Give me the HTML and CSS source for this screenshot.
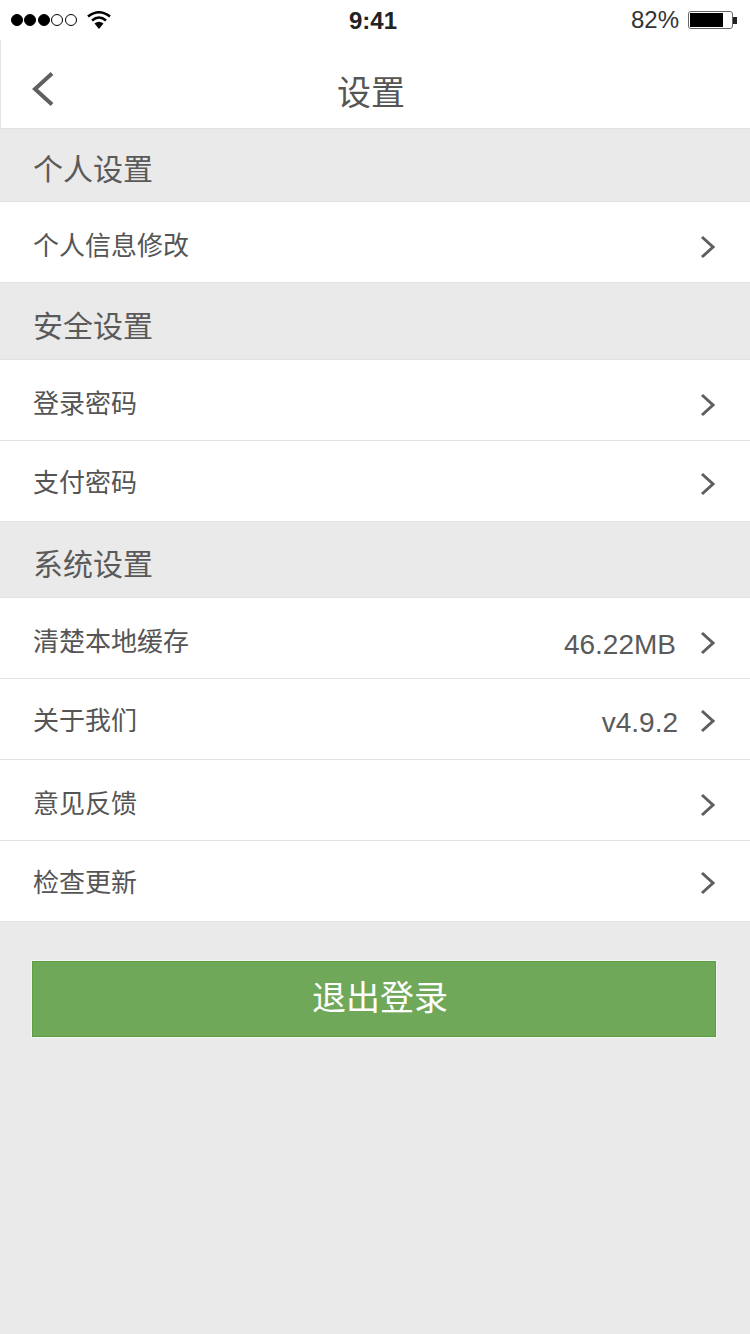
FILE: index.html
```html
<!DOCTYPE html>
<html lang="zh-CN">
<head>
    <meta charset="UTF-8">
    <meta name="viewport" content="width=device-width, initial-scale=1.0">
    <title>设置</title>
    <link rel="stylesheet" href="styles.css">
</head>
<body>

    <div class="status-bar">
        <div class="status-left">
            <span class="dot on"></span><span class="dot on"></span><span class="dot on"></span><span class="dot"></span><span class="dot"></span>
            <svg class="wifi" width="24" height="19" viewBox="0 0 24 19">
                <path d="M1 6.5 Q12 -2 23 6.5" fill="none" stroke="#000" stroke-width="2.6"/>
                <path d="M5 10.5 Q12 4.5 19 10.5" fill="none" stroke="#000" stroke-width="2.6"/>
                <path d="M7.5 13.5 Q12 10 16.5 13.5 L12 19 Z" fill="#000"/>
            </svg>
        </div>
        <div class="status-time">9:41</div>
        <div class="status-right">
            <span class="percent">82%</span>
            <span class="battery"><span class="battery-level"></span></span>
            <span class="battery-tip"></span>
        </div>
    </div>

    <header class="nav">
        <svg class="back" width="24" height="36" viewBox="0 0 24 36">
            <path d="M21 2.5 L4 18 L21 33.5" fill="none" stroke="#5f5f5f" stroke-width="4"/>
        </svg>
        <h1>设置</h1>
    </header>

    <div class="section-title sec-1">个人设置</div>
    <div class="row row-first"><span class="label">个人信息修改</span><svg class="arrow" width="16" height="24" viewBox="0 0 16 24"><path d="M2 2 L13 12 L2 22" fill="none" stroke="#5f5f5f" stroke-width="3"/></svg></div>

    <div class="section-title sec-2">安全设置</div>
    <div class="row row-first row-low"><span class="label">登录密码</span><svg class="arrow" width="16" height="24" viewBox="0 0 16 24"><path d="M2 2 L13 12 L2 22" fill="none" stroke="#5f5f5f" stroke-width="3"/></svg></div>
    <div class="row row-tight"><span class="label">支付密码</span><svg class="arrow" width="16" height="24" viewBox="0 0 16 24"><path d="M2 2 L13 12 L2 22" fill="none" stroke="#5f5f5f" stroke-width="3"/></svg></div>

    <div class="section-title sec-3">系统设置</div>
    <div class="row row-first"><span class="label">清楚本地缓存</span><span class="value">46.22MB</span><svg class="arrow" width="16" height="24" viewBox="0 0 16 24"><path d="M2 2 L13 12 L2 22" fill="none" stroke="#5f5f5f" stroke-width="3"/></svg></div>
    <div class="row row-high"><span class="label">关于我们</span><span class="value">v4.9.2</span><svg class="arrow" width="16" height="24" viewBox="0 0 16 24"><path d="M2 2 L13 12 L2 22" fill="none" stroke="#5f5f5f" stroke-width="3"/></svg></div>
    <div class="row row-low"><span class="label">意见反馈</span><svg class="arrow" width="16" height="24" viewBox="0 0 16 24"><path d="M2 2 L13 12 L2 22" fill="none" stroke="#5f5f5f" stroke-width="3"/></svg></div>
    <div class="row row-high"><span class="label">检查更新</span><svg class="arrow" width="16" height="24" viewBox="0 0 16 24"><path d="M2 2 L13 12 L2 22" fill="none" stroke="#5f5f5f" stroke-width="3"/></svg></div>

    <div class="logout-wrap">
        <button class="logout">退出登录</button>
    </div>

</body>
</html>
```

FILE: styles.css
```css
html, body {
    margin: 0;
    padding: 0;
}

body {
    width: 750px;
    height: 1334px;
    overflow: hidden;
    background-color: #eaeaea;
    color: #555;
    font-family: "Liberation Sans", "Noto Sans CJK SC", sans-serif;
}

.status-bar {
    height: 40px;
    background-color: white;
    display: flex;
    align-items: center;
    justify-content: space-between;
    padding: 0 13px 0 11px;
    box-sizing: border-box;
    position: relative;
}

.status-left {
    display: flex;
    align-items: center;
    gap: 1px;
}

.dot {
    width: 10px;
    height: 10px;
    border: 1px solid #000;
    border-radius: 50%;
    margin-right: 0.4px;
}

.dot.on {
    background-color: #000;
}

.wifi {
    margin-left: 9px;
    margin-top: -1px;
}

.status-time {
    font-size: 24px;
    font-weight: bold;
    color: #222;
    position: absolute;
    left: 349px;
    top: 7px;
}

.status-right {
    display: flex;
    align-items: center;
}

.percent {
    font-size: 24px;
    color: #333;
    margin-right: 9px;
}

.battery {
    box-sizing: border-box;
    width: 45px;
    height: 18px;
    border: 1px solid #666;
    border-radius: 3px;
    padding: 1px;
    background-color: white;
    display: block;
}

.battery-level {
    display: block;
    width: 33px;
    height: 14px;
    background-color: #000;
}

.battery-tip {
    width: 4px;
    height: 7px;
    background-color: #222;
}

.nav {
    height: 88px;
    background-color: white;
    border-left: 1px solid #e4e4e4;
    border-bottom: 1px solid #e2e2e2;
    display: flex;
    align-items: center;
    justify-content: center;
    position: relative;
}

.nav h1 {
    margin: 12px 9px 0 0;
    font-size: 34px;
    font-weight: normal;
    color: #555;
}

.back {
    position: absolute;
    left: 30px;
    top: 31px;
}

.section-title {
    box-sizing: border-box;
    padding-left: 33px;
    font-size: 30px;
    display: flex;
    align-items: center;
    color: #5a5a5a;
}

.sec-1 { height: 72px; padding-top: 3px; }
.sec-2 { height: 76px; padding-top: 5px; }
.sec-3 { height: 75px; padding-top: 5px; }

.row {
    box-sizing: border-box;
    height: 81px;
    background-color: white;
    border-bottom: 1px solid #e2e2e2;
    padding: 0 34px 0 33px;
    display: flex;
    align-items: center;
    font-size: 26px;
    color: #555;
}

.row-first {
    border-top: 1px solid #e2e2e2;
    height: 82px;
    padding-top: 2px;
}

.row-low {
    padding-top: 3px;
}

.row-high {
    padding-bottom: 1px;
}

.row-tight {
    padding-bottom: 2px;
}

.label {
    margin-right: auto;
}

.value {
    font-size: 28px;
    margin: 12px 24px 0 0;
    color: #5a5a5a;
}

.row-high .value {
    margin: 8px 22px 0 0;
}

.arrow {
    flex-shrink: 0;
    margin-top: 8px;
}

.row-low .arrow {
    margin-top: 6px;
}

.row-high .arrow {
    margin-top: 5px;
}

.logout-wrap {
    padding: 39px 34px 0 32px;
}

.logout {
    display: block;
    width: 100%;
    height: 76px;
    padding: 0 0 8px 12px;
    background-color: #70a85a;
    border: 1px solid #5b9f40;
    color: white;
    font-family: inherit;
    font-size: 34px;
    outline: 1px solid #f4f4f4;
    cursor: pointer;
}
```
